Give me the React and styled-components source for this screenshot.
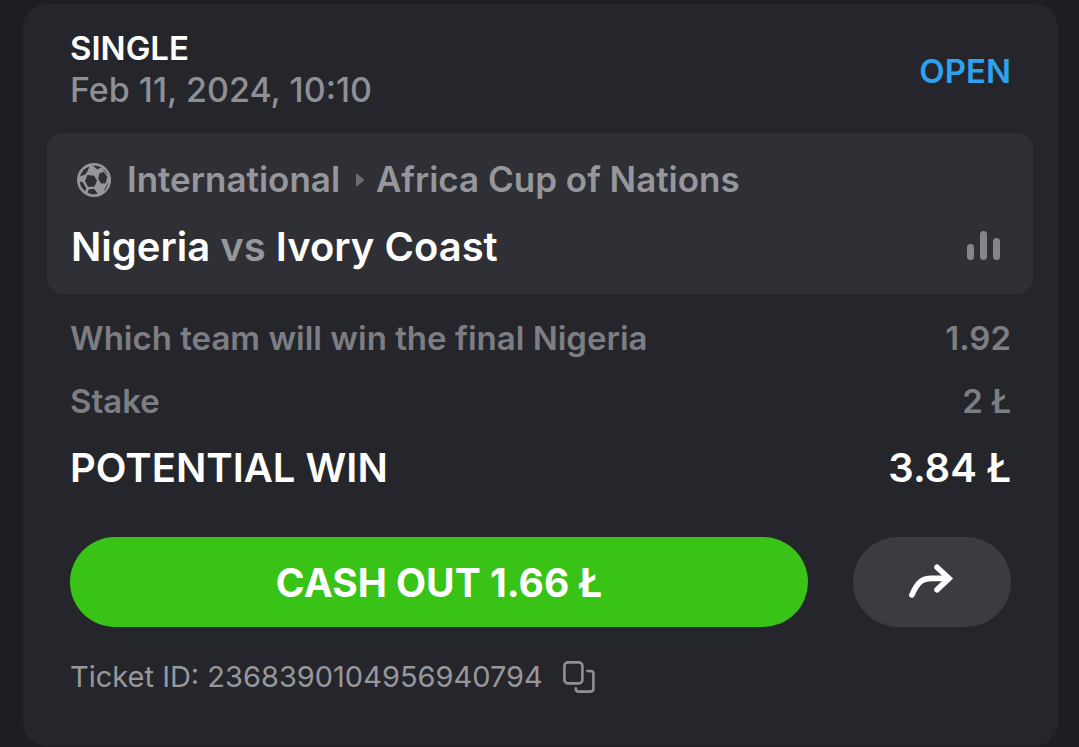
import styled, { createGlobalStyle } from 'styled-components';

const GlobalStyle = createGlobalStyle`
  * {
    box-sizing: border-box;
  }

  body {
    margin: 0;
    background: #1d1e22;
    font-family: Inter, 'Liberation Sans', sans-serif;
  }
`;

const Page = styled.main`
  padding: 4px 21px 2px 23px;
`;

const Card = styled.article`
  padding: 24px 25px 48px 24px;
  border-radius: 24px;
  background: #25262b;
`;

const Header = styled.header`
  display: flex;
  align-items: center;
  justify-content: space-between;
  padding: 0 22px 0 23px;
  margin-bottom: 23px;
`;

const BetType = styled.h1`
  margin: 0;
  font-size: 33px;
  line-height: 41px;
  font-weight: 600;
  color: #fff;
`;

const BetDate = styled.time`
  display: block;
  font-size: 34px;
  line-height: 41px;
  font-weight: 500;
  color: #8f9095;
`;

const Status = styled.span`
  padding-top: 4px;
  font-size: 33px;
  line-height: 41px;
  font-weight: 600;
  color: #2da2ef;
`;

const EventPanel = styled.section`
  padding: 24px 24px 25px;
  border-radius: 16px;
  background: #2f3035;
`;

const League = styled.div`
  display: flex;
  align-items: center;
  padding-left: 6px;
  margin-bottom: 22px;
  font-size: 35px;
  line-height: 45px;
  font-weight: 600;
  color: #96979c;
`;

const LeagueName = styled.span`
  margin-left: ${({ $gap }) => $gap}px;
`;

const Chevron = styled.svg`
  margin-left: 16px;
`;

const Match = styled.div`
  display: flex;
  align-items: center;
  justify-content: space-between;
  padding-right: 9px;
`;

const Teams = styled.h2`
  margin: 0;
  font-size: 40px;
  line-height: 45px;
  font-weight: 600;
  color: #fff;

  span {
    color: #96979c;
  }
`;

const IconButton = styled.button`
  display: flex;
  padding: 0;
  border: 0;
  background: none;
  color: ${({ $color }) => $color};
  cursor: pointer;
`;

const Details = styled.dl`
  margin: 12px 0 35px;
  padding: 0 22px 0 23px;
`;

const DetailRow = styled.div`
  display: flex;
  align-items: center;
  justify-content: space-between;
  height: 63px;
  font-size: 33px;
  font-weight: 600;
  color: #7d7e83;

  dd {
    margin: 0;
  }
`;

const TotalRow = styled(DetailRow)`
  height: 70px;
  font-size: 40px;
  color: #fff;
`;

const Actions = styled.div`
  display: flex;
  gap: 45px;
  padding: 0 22px 0 23px;
  margin-bottom: 29px;
`;

const Pill = styled.button`
  display: flex;
  align-items: center;
  justify-content: center;
  height: 90px;
  padding: 0;
  border: 0;
  border-radius: 45px;
  font-family: inherit;
  color: #fff;
  cursor: pointer;
`;

const CashOutButton = styled(Pill)`
  flex: 1;
  font-size: 39px;
  font-weight: 700;
  background: #3ac317;
`;

const ShareButton = styled(Pill)`
  width: 158px;
  background: #3b3c41;
`;

const Ticket = styled.footer`
  display: flex;
  align-items: center;
  gap: 20px;
  padding: 0 22px 0 23px;
  font-size: 29px;
  line-height: 42px;
  color: #97989c;
`;

function BallIcon() {
  return (
    <svg width="34" height="34" viewBox="0 0 34 34" aria-hidden="true">
      <circle cx="17" cy="17" r="17" fill="#96979c" />
      <g fill="#2f3035">
        <path d="M10.4 12 17.2 12.8 20 17.4 17.6 23.4 11.2 24 8 18Z" />
        <path d="M22 10.8 26.6 8.8 30.2 13.6 28.8 20.200 24 20.400 21.400 16Z" />
        <path d="M12.400 3.400 10.400 8.200 8.600 11.200 3 13.600C4 9 7.400 5.200 12.400 3.400Z" />
        <path d="M15.600 2.800C19 2.400 22 3 24.400 4.400L20.400 6.200Z" />
        <path d="M25.600 5.400C28.200 7.200 30 9.600 31 12.600L27.400 8Z" />
        <path d="M2.800 18.600 6 19.400 9.200 25.200 8.200 28.200C5.200 26 3.200 23 2.800 18.600Z" />
        <path d="M10.600 29.400 11.600 26.400 17 25.800 20.800 30.800C17.200 31.800 13.800 31.200 10.600 29.400Z" />
        <path d="M29.200 23.200 31.200 19.400C30.600 23.200 29 26.400 26.600 28.200Z" />
      </g>
    </svg>
  );
}

function StatsIcon() {
  return (
    <svg width="34" height="32" viewBox="0 0 34 32" fill="currentColor" aria-hidden="true">
      <rect x="1" y="13" width="7" height="16" rx="3.500" />
      <rect x="14" y="0" width="7" height="29" rx="3.500" />
      <rect x="27" y="7" width="7" height="22" rx="3.500" />
    </svg>
  );
}

function ShareIcon() {
  return (
    <svg width="46" height="36" viewBox="0 0 46 36" fill="none" stroke="currentColor" strokeWidth="5.600" strokeLinecap="round" aria-hidden="true">
      <path d="M2.900 31C8.500 18.200 13 14.400 22.600 14.400H38" />
      <path d="M28 3.200 40 14.400 28 25.800" strokeLinejoin="miter" />
    </svg>
  );
}

function CopyIcon() {
  return (
    <svg width="32" height="32" viewBox="0 0 32 32" fill="none" stroke="currentColor" strokeWidth="2.600" strokeLinecap="round" aria-hidden="true">
      <rect x="1.400" y="1.400" width="18" height="21" rx="3.600" />
      <path d="M24.400 10H27.400Q30.400 10 30.400 13V27.600Q30.400 30.600 27.400 30.600H16Q12.800 30.600 12.800 27.400" />
    </svg>
  );
}

const details = [
  { label: 'Which team will win the final Nigeria', value: '1.92' },
  { label: 'Stake', value: '2 Ł' }
];

export default function App() {
  return (
    <Page>
      <GlobalStyle />
      <Card>
        <Header>
          <div>
            <BetType>SINGLE</BetType>
            <BetDate dateTime="2024-02-11T10:10">Feb 11, 2024, 10:10</BetDate>
          </div>
          <Status>OPEN</Status>
        </Header>

        <EventPanel>
          <League>
            <BallIcon />
            <LeagueName $gap={16}>International</LeagueName>
            <Chevron width="8" height="12" viewBox="0 0 8 12" aria-hidden="true">
              <path d="M1 1 7 6 1 11Z" fill="#6c6d72" stroke="#6c6d72" strokeWidth="2" strokeLinejoin="round" />
            </Chevron>
            <LeagueName $gap={12}>Africa Cup of Nations</LeagueName>
          </League>
          <Match>
            <Teams>Nigeria <span>vs</span> Ivory Coast</Teams>
            <IconButton type="button" aria-label="Statistics" $color="#85868a">
              <StatsIcon />
            </IconButton>
          </Match>
        </EventPanel>

        <Details>
          {details.map(({ label, value }) => (
            <DetailRow key={label}>
              <dt>{label}</dt>
              <dd>{value}</dd>
            </DetailRow>
          ))}
          <TotalRow>
            <dt>POTENTIAL WIN</dt>
            <dd>3.84 Ł</dd>
          </TotalRow>
        </Details>

        <Actions>
          <CashOutButton type="button">CASH OUT 1.66 Ł</CashOutButton>
          <ShareButton type="button" aria-label="Share">
            <ShareIcon />
          </ShareButton>
        </Actions>

        <Ticket>
          <span>Ticket ID: 2368390104956940794</span>
          <IconButton type="button" aria-label="Copy ticket ID" $color="#8f9095">
            <CopyIcon />
          </IconButton>
        </Ticket>
      </Card>
    </Page>
  );
}
